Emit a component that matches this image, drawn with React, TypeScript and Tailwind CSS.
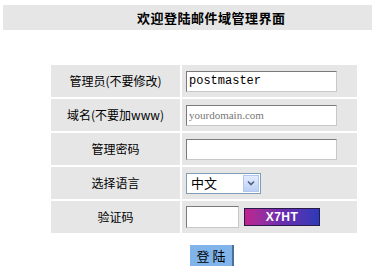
import React from 'react';

const cjk = { fontFamily: '"Noto Sans CJK SC", "Liberation Sans", sans-serif' };
const mono = { fontFamily: '"Liberation Mono", "Noto Sans CJK SC", monospace' };
const serif = { fontFamily: '"Liberation Serif", "Noto Sans CJK SC", serif' };

const Row: React.FC<{ label: string; children: React.ReactNode }> = ({ label, children }) => (
  <>
    <div className="bg-[#e6e6e6] h-[32px] flex items-center justify-center text-[12px] text-black">{label}</div>
    <div className="bg-[#e6e6e6] h-[32px] flex items-center pl-[4px]">{children}</div>
  </>
);

const App: React.FC = () => {
  return (
    <div className="w-[375px] h-[266px] bg-white overflow-hidden" style={cjk}>
      <div className="mt-[5px] mx-[3px] h-[25px] bg-[#e6e6e6] flex items-center">
        <span className="ml-[134px] text-[13px] font-bold text-black tracking-[0.5px]">欢迎登陆邮件域管理界面</span>
      </div>

      <div className="mt-[35px] ml-[51px] w-[306px] grid grid-cols-[129px_175px] gap-[2px]">
        <Row label="管理员(不要修改)">
          <input
            defaultValue="postmaster"
            className="w-[151px] h-[21px] bg-white border border-[#7a7a7a] border-r-[#c8c8c8] border-b-[#c8c8c8] px-[2px] text-[12px] text-black outline-none"
            style={mono}
          />
        </Row>
        <Row label="域名(不要加www)">
          <input
            placeholder="yourdomain.com"
            className="w-[151px] h-[21px] bg-white border border-[#7a7a7a] border-r-[#c8c8c8] border-b-[#c8c8c8] px-[2px] text-[11px] text-black placeholder:text-[#777] outline-none"
            style={serif}
          />
        </Row>
        <Row label="管理密码">
          <input
            type="password"
            className="w-[151px] h-[21px] bg-white border border-[#7a7a7a] border-r-[#c8c8c8] border-b-[#c8c8c8] px-[2px] text-[12px] outline-none"
          />
        </Row>
        <Row label="选择语言">
          <div className="w-[75px] h-[21px] bg-white border border-[#7f9db9] flex items-center justify-between">
            <span className="pl-[4px] text-[13px] text-black">中文</span>
            <span className="w-[16px] h-[17px] mr-[1px] bg-gradient-to-b from-[#e3ecfd] to-[#bcd0f5] border border-[#b2c7ef] flex items-center justify-center">
              <svg width="8" height="6" viewBox="0 0 8 6">
                <path d="M1 1.5 L4 4.5 L7 1.5" fill="none" stroke="#4d6185" strokeWidth="1.6" />
              </svg>
            </span>
          </div>
        </Row>
        <Row label="验证码">
          <div className="flex items-center gap-[5px]">
            <input className="w-[53px] h-[22px] bg-white border border-[#7a7a7a] border-r-[#c8c8c8] border-b-[#c8c8c8] outline-none" />
            <div className="w-[76px] h-[18px] border border-[#2a1a4a] bg-gradient-to-r from-[#c0208f] via-[#6a2ab0] to-[#2a3ab8] flex items-center justify-center">
              <span className="text-white text-[12px] font-bold leading-none tracking-[0.5px]" style={{ fontFamily: '"Liberation Sans", sans-serif' }}>X7HT</span>
            </div>
          </div>
        </Row>
      </div>

      <div className="mt-[12px] ml-[190px] w-[44px] h-[21px] bg-[#80b4ea] border-r-2 border-[#4f6f94] flex items-center justify-center text-[13px] text-black">
        登&nbsp;陆
      </div>
    </div>
  );
};

export default App;
